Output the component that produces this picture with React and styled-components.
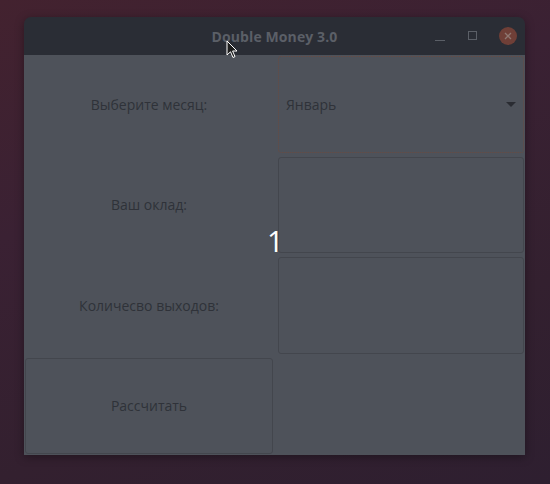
import React from 'react'
import styled, { createGlobalStyle } from 'styled-components'

const GlobalStyle = createGlobalStyle`
  html, body {
    margin: 0;
    padding: 0;
  }
  body {
    width: 550px;
    height: 484px;
    overflow: hidden;
    font-family: "Open Sans", "DejaVu Sans", sans-serif;
    background: linear-gradient(160deg, #43222f 0%, #3a2133 35%, #33202f 70%, #2e1f30 100%);
  }
`

const Desktop = styled.div`
  position: relative;
  width: 550px;
  height: 484px;
  padding: 17px 0 0 24px;
  box-sizing: border-box;
`

const Window = styled.div`
  width: 501px;
  height: 438px;
  display: flex;
  flex-direction: column;
  border-radius: 7px 7px 0 0;
  overflow: hidden;
  box-shadow: 0 2px 10px rgba(0, 0, 0, 0.35);
`

const TitleBar = styled.div`
  height: 38px;
  flex: none;
  background: #2a2d35;
  display: grid;
  grid-template-columns: 1fr auto 1fr;
  align-items: center;
  padding: 0 10px;
`

const Title = styled.div`
  grid-column: 2;
  color: #5b5f67;
  font-weight: 700;
  font-size: 14px;
  letter-spacing: 0.1px;
`

const Controls = styled.div`
  grid-column: 3;
  justify-self: end;
  display: flex;
  align-items: center;
  gap: 19px;
  margin-right: -2px;
`

const CtrlButton = styled.div`
  width: 14px;
  height: 14px;
  display: flex;
  align-items: center;
  justify-content: center;
`

const Close = styled.div`
  width: 18px;
  height: 18px;
  border-radius: 50%;
  background: #6f3f37;
  display: flex;
  align-items: center;
  justify-content: center;
`

const Body = styled.div`
  flex: 1;
  background: #4e525a;
  display: grid;
  grid-template-columns: 248px 1fr;
  grid-template-rows: repeat(4, 1fr);
  column-gap: 5px;
  row-gap: 4px;
  padding: 1px;
`

const Label = styled.div`
  display: flex;
  align-items: center;
  justify-content: center;
  color: #2f3239;
  font-size: 14px;
`

const Field = styled.div`
  border: 1px ${p => (p.focused ? 'dotted #6a4b42' : 'solid #43464d')};
  border-radius: 3px;
  display: flex;
  align-items: center;
  justify-content: space-between;
  padding: 0 7px 0 7px;
  color: #2f3239;
  font-size: 14px;
`

const Arrow = styled.div`
  width: 0;
  height: 0;
  border-left: 5px solid transparent;
  border-right: 5px solid transparent;
  border-top: 5px solid #2a2c32;
`

const Button = styled.div`
  border: 1px solid #43464d;
  border-radius: 3px;
  display: flex;
  align-items: center;
  justify-content: center;
  color: #2f3239;
  font-size: 14px;
`

const Badge = styled.div`
  position: absolute;
  left: 267px;
  top: 226px;
  color: #ffffff;
  font-size: 29px;
  font-family: "Open Sans", sans-serif;
  line-height: 1;
`

const Pointer = styled.svg`
  position: absolute;
  left: 226px;
  top: 40px;
`

export default function App() {
  return (
    <>
      <GlobalStyle />
      <Desktop>
        <Window>
          <TitleBar>
            <Title>Double Money 3.0</Title>
            <Controls>
              <CtrlButton>
                <svg width="12" height="12" viewBox="0 0 12 12">
                  <line x1="1" y1="10.5" x2="11" y2="10.5" stroke="#5b5f67" strokeWidth="1" />
                </svg>
              </CtrlButton>
              <CtrlButton>
                <svg width="12" height="12" viewBox="0 0 12 12">
                  <rect x="1.5" y="1.5" width="8" height="8" fill="none" stroke="#5b5f67" strokeWidth="1" />
                </svg>
              </CtrlButton>
              <Close>
                <svg width="10" height="10" viewBox="0 0 10 10">
                  <path d="M2 2 L8 8 M8 2 L2 8" stroke="#8f7771" strokeWidth="1.3" />
                </svg>
              </Close>
            </Controls>
          </TitleBar>
          <Body>
            <Label>Выберите месяц:</Label>
            <Field focused>
              <span>Январь</span>
              <Arrow />
            </Field>
            <Label>Ваш оклад:</Label>
            <Field />
            <Label>Количесво выходов:</Label>
            <Field />
            <Button>Рассчитать</Button>
            <div />
          </Body>
        </Window>
        <Badge>1</Badge>
        <Pointer width="14" height="20" viewBox="0 0 14 20">
          <path d="M1 1 L1 15 L4.5 11.8 L7 17.5 L9 16.6 L6.6 11 L11 11 Z" fill="#1e1e1e" stroke="#ffffff" strokeWidth="1" />
        </Pointer>
      </Desktop>
    </>
  )
}
